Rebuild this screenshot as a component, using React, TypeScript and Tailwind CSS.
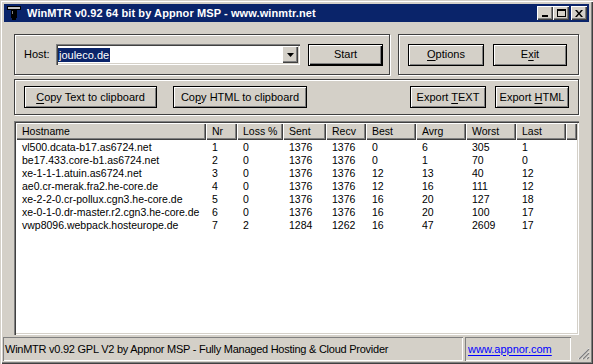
import React from "react"

const face = "bg-[#d4d0c8]"

const rows = [
  ["vl500.dcata-b17.as6724.net", "1", "0", "1376", "1376", "0", "6", "305", "1"],
  ["be17.433.core-b1.as6724.net", "2", "0", "1376", "1376", "0", "1", "70", "0"],
  ["xe-1-1-1.atuin.as6724.net", "3", "0", "1376", "1376", "12", "13", "40", "12"],
  ["ae0.cr-merak.fra2.he-core.de", "4", "0", "1376", "1376", "12", "16", "111", "12"],
  ["xe-2-2-0.cr-pollux.cgn3.he-core.de", "5", "0", "1376", "1376", "16", "20", "127", "18"],
  ["xe-0-1-0.dr-master.r2.cgn3.he-core.de", "6", "0", "1376", "1376", "16", "20", "100", "17"],
  ["vwp8096.webpack.hosteurope.de", "7", "2", "1284", "1262", "16", "47", "2609", "17"],
]

const cols = [
  { name: "Hostname", w: "w-[190px]" },
  { name: "Nr", w: "w-[31px]" },
  { name: "Loss %", w: "w-[46px]" },
  { name: "Sent", w: "w-[43px]" },
  { name: "Recv", w: "w-[40px]" },
  { name: "Best", w: "w-[50px]" },
  { name: "Avrg", w: "w-[50px]" },
  { name: "Worst", w: "w-[50px]" },
  { name: "Last", w: "w-[50px]" },
]

// classic push button
const Btn = ({ w, children, def }: { w: string; children: React.ReactNode; def?: boolean }) => (
  <div
    className={`${w} h-[22px] ${face} flex items-center justify-center border border-black ${
      def
        ? "shadow-[inset_1px_1px_0_#fff,inset_-1px_-1px_0_#000,inset_-2px_-2px_0_#808080]"
        : "shadow-[inset_1px_1px_0_#fff,inset_-1px_-1px_0_#808080]"
    }`}
  >
    <span className="leading-none">{children}</span>
  </div>
)

const U = ({ children }: { children: React.ReactNode }) => (
  <span className="underline underline-offset-[2px]">{children}</span>
)

const CapBtn = ({ children }: { children: React.ReactNode }) => (
  <div className="w-[16px] h-[14px] bg-[#d4d0c8] flex items-center justify-center shadow-[inset_1px_1px_0_#fff,inset_-1px_-1px_0_#404040,inset_-2px_-2px_0_#808080]">
    {children}
  </div>
)

const App = () => {
  return (
    <div
      className={`w-[593px] h-[364px] ${face} p-[3px] flex flex-col text-[11px] text-black shadow-[inset_1px_1px_0_#d4d0c8,inset_2px_2px_0_#fff,inset_-1px_-1px_0_#404040,inset_-2px_-2px_0_#808080]`}
      style={{ fontFamily: '"Liberation Sans", Arial, sans-serif' }}
    >
      {/* Title bar */}
      <div className="mx-[1px] mt-[1px] h-[18px] bg-[#0a246a] flex items-center pl-[2px] pr-[2px]">
        <svg width="16" height="16" viewBox="0 0 16 16" className="shrink-0">
          <rect x="1" y="1" width="14" height="4" fill="#000" />
          <rect x="2" y="2" width="12" height="2" fill="#c0c0c0" />
          <rect x="5" y="5" width="6" height="8" fill="#000" />
          <rect x="6" y="6" width="1" height="3" fill="#808080" />
          <rect x="6" y="13" width="4" height="2" fill="#000" />
        </svg>
        <span className="ml-[5px] text-white font-bold text-[11px] tracking-[0.1px]">
          WinMTR v0.92 64 bit by Appnor MSP - www.winmtr.net
        </span>
        <div className="ml-auto flex items-center">
          <CapBtn>
            <div className="w-[6px] h-[2px] bg-black mt-[6px] mr-[1px]" />
          </CapBtn>
          <CapBtn>
            <div className="w-[9px] h-[8px] border border-black border-t-2" />
          </CapBtn>
          <div className="ml-[2px]">
            <CapBtn>
              <svg width="8" height="7" viewBox="0 0 8 7">
                <path d="M0 0h2l2 2.5 2-2.5h2L5 3.5 8 7H6L4 4.5 2 7H0l3-3.5z" fill="#000" />
              </svg>
            </CapBtn>
          </div>
        </div>
      </div>

      <div className="px-[11px] flex flex-col">
        {/* Host + Options groups */}
        <div className="mt-[12px] flex gap-[8px]">
          <div className="w-[376px] h-[41px] border border-[#404040] shadow-[inset_1px_1px_0_#fff,1px_1px_0_#fff] flex items-center pl-[9px]">
            <span className="w-[32px]">Host:</span>
            <div className="w-[244px] h-[21px] bg-white flex shadow-[inset_1px_1px_0_#808080,inset_2px_2px_0_#404040,inset_-1px_-1px_0_#fff,inset_-2px_-2px_0_#d4d0c8] p-[2px]">
              <div className="flex-1 flex items-center">
                <span className="bg-[#0a246a] text-white px-[1px] leading-[14px]">jouleco.de</span>
              </div>
              <div className="w-[16px] h-[17px] bg-[#d4d0c8] flex items-center justify-center shadow-[inset_1px_1px_0_#fff,inset_-1px_-1px_0_#404040,inset_-2px_-2px_0_#808080]">
                <svg width="7" height="4" viewBox="0 0 7 4">
                  <path d="M0 0h7L3.5 4z" fill="#000" />
                </svg>
              </div>
            </div>
            <div className="ml-[8px]">
              <Btn w="w-[75px]" def>
                Start
              </Btn>
            </div>
          </div>
          <div className="flex-1 h-[41px] border border-[#404040] shadow-[inset_1px_1px_0_#fff,1px_1px_0_#fff] flex items-center pl-[9px] gap-[9px]">
            <Btn w="w-[76px]">
              <U>O</U>ptions
            </Btn>
            <Btn w="w-[74px]">
              E<U>x</U>it
            </Btn>
          </div>
        </div>

        {/* Copy / export group */}
        <div className="mt-[4px] h-[36px] border border-[#404040] shadow-[inset_1px_1px_0_#fff,1px_1px_0_#fff] flex items-center pl-[9px]">
          <Btn w="w-[133px]">
            <U>C</U>opy Text to clipboard
          </Btn>
          <div className="ml-[16px]">
            <Btn w="w-[134px]">
              Co<U>p</U>y HTML to clipboard
            </Btn>
          </div>
          <div className="ml-auto mr-[9px] flex gap-[9px]">
            <Btn w="w-[76px]">
              Export <U>T</U>EXT
            </Btn>
            <Btn w="w-[74px]">
              Export <U>H</U>TML
            </Btn>
          </div>
        </div>

        {/* List view */}
        <div className="mt-[6px] h-[214px] bg-white p-[2px] text-[10.5px] shadow-[inset_1px_1px_0_#808080,inset_2px_2px_0_#404040,inset_-1px_-1px_0_#fff,inset_-2px_-2px_0_#d4d0c8]">
          <div className="flex h-[17px]">
            {cols.map((c) => (
              <div
                key={c.name}
                className={`${c.w} shrink-0 ${face} pl-[6px] flex items-center shadow-[inset_1px_1px_0_#fff,inset_-1px_-1px_0_#404040,inset_-2px_-2px_0_#808080]`}
              >
                {c.name}
              </div>
            ))}
            <div className={`flex-1 ${face} shadow-[inset_1px_1px_0_#fff,inset_-1px_-1px_0_#404040,inset_-2px_-2px_0_#808080]`} />
          </div>
          <div className="pt-[1px]">
            {rows.map((r, i) => (
              <div key={i} className="flex h-[13px] items-center">
                {r.map((v, j) => (
                  <div key={j} className={`${cols[j].w} shrink-0 pl-[6px] whitespace-nowrap leading-[13px]`}>
                    {v}
                  </div>
                ))}
              </div>
            ))}
          </div>
        </div>
      </div>

      {/* Status bar */}
      <div className="mt-[2px] h-[24px] flex items-stretch">
        <div className="w-[460px] flex items-center pl-[2px] tracking-[-0.25px] shadow-[inset_1px_1px_0_#808080,inset_-1px_-1px_0_#fff]">
          WinMTR v0.92 GPL V2 by Appnor MSP - Fully Managed Hosting &amp; Cloud Provider
        </div>
        <div className="ml-[2px] w-[106px] flex items-center pl-[3px] shadow-[inset_1px_1px_0_#808080,inset_-1px_-1px_0_#fff]">
          <span className="text-[#0000ff] underline underline-offset-[2px]">www.appnor.com</span>
        </div>
        <div className="flex-1 flex items-end justify-end pb-[1px]">
          <svg width="13" height="13" viewBox="0 0 13 13">
            <path d="M12 1L1 12M12 5L5 12M12 9L9 12" stroke="#fff" strokeWidth="1" />
            <path d="M12 2L2 12M12 6L6 12M12 10L10 12" stroke="#808080" strokeWidth="1.4" />
          </svg>
        </div>
      </div>
    </div>
  )
}

export default App
